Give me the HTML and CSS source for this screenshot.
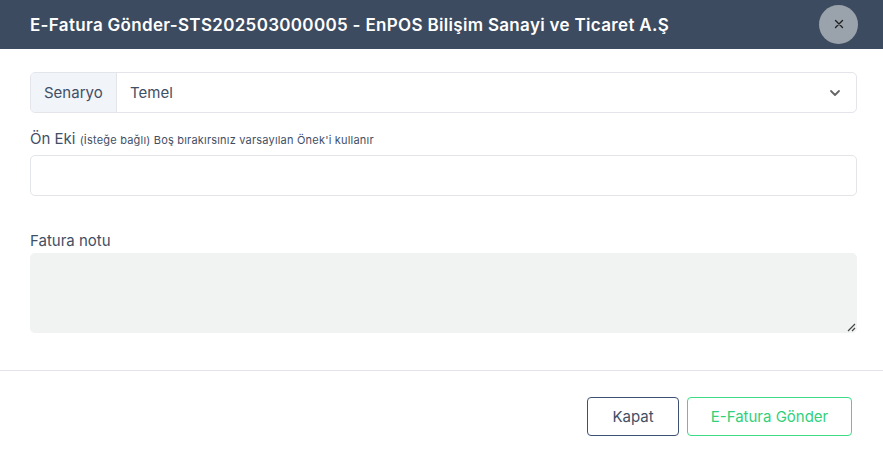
FILE: index.html
```html
<!DOCTYPE html>
<html lang="tr">
<head>
<meta charset="utf-8">
<link rel="stylesheet" href="styles.css">
</head>
<body>
<div class="modal">
  <div class="modal-header">
    <h1 class="modal-title">E-Fatura Gönder-STS202503000005 - EnPOS Bilişim Sanayi ve Ticaret A.Ş</h1>
    <button class="close-btn" aria-label="Kapat">
      <svg width="10" height="10" viewBox="0 0 10 10"><path d="M1.5 1.5L8.5 8.5M8.5 1.5L1.5 8.5" stroke="#222" stroke-width="1.4" stroke-linecap="round"/></svg>
    </button>
  </div>
  <div class="modal-body">
    <div class="input-group">
      <span class="group-label">Senaryo</span>
      <div class="select">
        <span>Temel</span>
        <svg width="12" height="8" viewBox="0 0 12 8"><path d="M2 2L6 6L10 2" stroke="#666" stroke-width="1.8" fill="none" stroke-linecap="round" stroke-linejoin="round"/></svg>
      </div>
    </div>
    <label class="field-label prefix-label">Ön Eki <small>(İsteğe bağlı) Boş bırakırsınız varsayılan Önek'i kullanır</small></label>
    <div class="text-input"></div>
    <label class="field-label note-label">Fatura notu</label>
    <div class="textarea">
      <svg class="grip" width="10" height="10" viewBox="0 0 10 10"><path d="M9 2L2 9M9 6L6 9" stroke="#444" stroke-width="1.2"/></svg>
    </div>
  </div>
  <div class="modal-footer">
    <button class="btn btn-close">Kapat</button>
    <button class="btn btn-send">E-Fatura Gönder</button>
  </div>
</div>
</body>
</html>
```
FILE: styles.css
```css
* { box-sizing: border-box; }
html, body { margin: 0; padding: 0; background: #fff; }
body { font-family: "Inter", "Open Sans", sans-serif; color: #3f4f66; }
.modal { width: 883px; height: 451px; display: flex; flex-direction: column; }
.modal-header {
  height: 49px; background: #3c4b5f; display: flex; align-items: center;
  justify-content: space-between; padding: 0 25px 0 30px;
}
.modal-title { margin: 0; font-size: 17px; font-weight: 600; color: #fff; letter-spacing: 0.32px; }
.close-btn {
  width: 39px; height: 39px; border-radius: 50%; border: none; background: #9aa2ac;
  display: flex; align-items: center; justify-content: center; padding: 0; margin-top: -1px;
}
.modal-body { padding: 23px 26px 0 30px; display: flex; flex-direction: column; height: 322px; border-bottom: 1px solid #e3e3ea; }
.input-group { display: flex; height: 41px; border: 1px solid #e3e5ea; border-radius: 5px; overflow: hidden; }
.group-label {
  width: 86px; background: #f1f4f8; border-right: 1px solid #e3e5ea; display: flex; align-items: center;
  padding-left: 13px; font-size: 15px; color: #3f4f66;
}
.select { flex: 1; display: flex; align-items: center; justify-content: space-between; padding: 0 15px 0 13px; font-size: 15px; color: #3f4f66; }
.field-label { font-size: 15px; color: #3f4f66; }
.field-label small { font-size: 11px; letter-spacing: 0.2px; }
.prefix-label { margin-top: 16px; height: 26px; }
.text-input { height: 41px; border: 1px solid #e3e5ea; border-radius: 5px; }
.note-label { margin-top: 35px; height: 22px; }
.textarea { height: 80px; background: #f1f2f2; border-radius: 5px; position: relative; }
.grip { position: absolute; right: 1px; bottom: 1px; }
.modal-footer { flex: 1; display: flex; justify-content: flex-end; align-items: flex-start; padding: 26px 31px 0 0; gap: 8px; }
.btn { height: 39px; border-radius: 4px; background: #fff; font-family: inherit; font-size: 15px; cursor: pointer; }
.btn-close { width: 92px; border: 1px solid #3c5173; color: #3f4f66; }
.btn-send { width: 165px; border: 1px solid #3ddc84; color: #33d07a; }
```
